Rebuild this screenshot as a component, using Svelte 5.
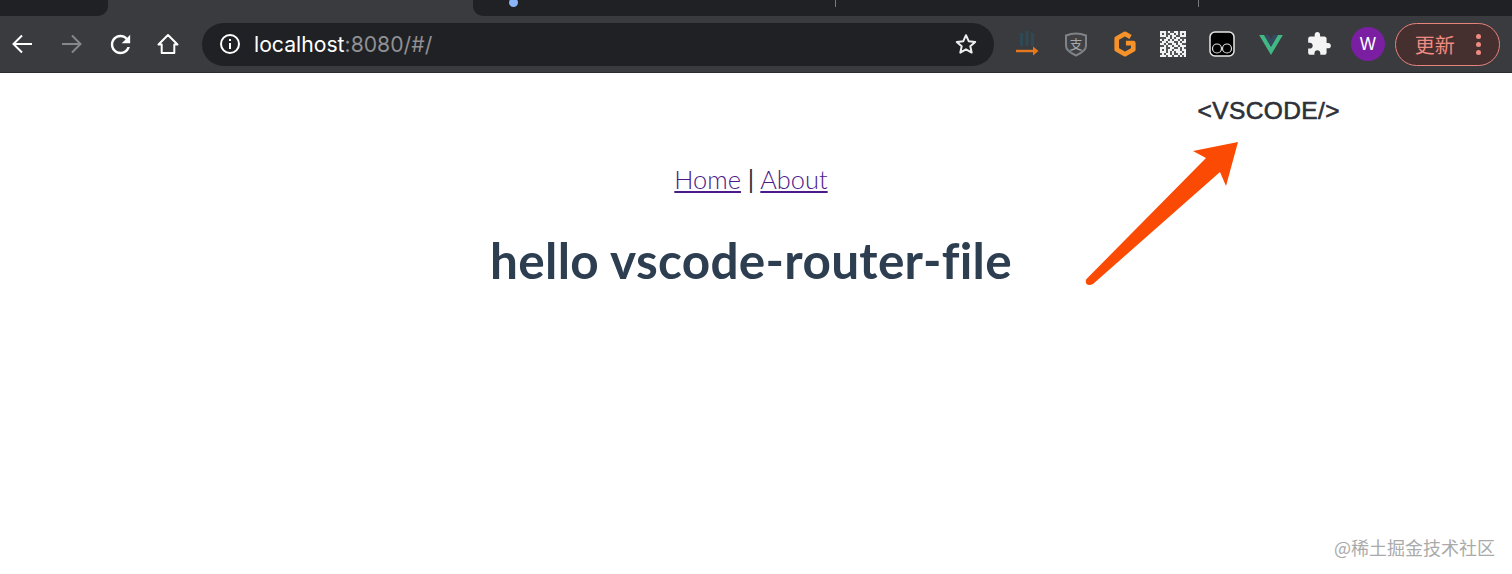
<script>
  const qr = [
    "1110100110111",
    "1010011010101",
    "1110101100111",
    "0001101011000",
    "1011010110101",
    "0110111001011",
    "1101001101100",
    "0010110110111",
    "1110011001010",
    "1010110111011",
    "1110101011101",
    "0101101001011",
    "1110110110101"
  ];
</script>

<div class="chrome">
  <div class="tabstrip">
    <div class="tab first"></div>
    <div class="tab active"></div>
    <div class="tab second">
      <span class="dot"></span>
      <span class="sep one"></span>
      <span class="sep two"></span>
    </div>
  </div>
  <div class="toolbar">
    <button class="nav" aria-label="back">
      <svg width="24" height="24" viewBox="1.500 0 24 24"><path d="M21.500 12H3.500M11.500 3.500 3 12l8.500 8.500" fill="none" stroke="#fff" stroke-width="2"/></svg>
    </button>
    <button class="nav" aria-label="forward">
      <svg width="24" height="24" viewBox="0.500 0 24 24"><path d="M2.500 12h18M12.500 3.500 21 12l-8.500 8.500" fill="none" stroke="#85878a" stroke-width="2"/></svg>
    </button>
    <button class="nav" aria-label="reload">
      <svg width="29" height="29" viewBox="0 0 24 24"><path d="M17.650 6.350C16.200 4.900 14.210 4 12 4c-4.420 0-7.990 3.580-7.990 8s3.570 8 7.990 8c3.730 0 6.840-2.550 7.730-6h-2.080c-.82 2.330-3.040 4-5.650 4-3.310 0-6-2.690-6-6s2.690-6 6-6c1.660 0 3.140.69 4.220 1.780L13 11h7V4l-2.350 2.350z" fill="#fff"/></svg>
    </button>
    <button class="nav" aria-label="home">
      <svg width="24" height="24" viewBox="0 0 24 24"><path d="M12 3 2.500 12.500h3.200V21h12.600v-8.500h3.200z" fill="none" stroke="#fff" stroke-width="2" stroke-linejoin="round"/></svg>
    </button>
    <div class="omnibox">
      <svg class="info" width="22" height="22" viewBox="0 0 22 22"><circle cx="11" cy="11" r="9" fill="none" stroke="#fff" stroke-width="2"/><path d="M10 6h2v2h-2zM10 10h2v6h-2z" fill="#fff"/></svg>
      <span class="url">localhost<span class="muted">:8080/#/</span></span>
      <svg class="star" width="24" height="24" viewBox="0 0 24 24"><path d="M12 3.200l2.700 6 6.500.7-4.900 4.300 1.400 6.400L12 17.300l-5.700 3.300 1.400-6.400-4.900-4.300 6.500-.7z" fill="none" stroke="#eee" stroke-width="2" stroke-linejoin="round"/></svg>
    </div>
    <div class="extensions">
      <span class="ext">
        <svg width="24" height="26" viewBox="0 0 24 26"><path d="M5 2h3v13H5zM10.500 0h3v15h-3zM16 2h3v13h-3z" fill="#2f4a55"/><path d="M1 20h19" stroke="#e8781e" stroke-width="2.400"/><path d="M18 15.500l5.500 4.500-5.500 4.500z" fill="#e8781e"/></svg>
      </span>
      <span class="ext">
        <svg width="24" height="26" viewBox="0 0 24 26"><path d="M2 4.500Q12 .5 22 4.500V15q0 5-10 9.500Q2 20 2 15z" fill="#3f4144" stroke="#808285" stroke-width="2"/><text x="12" y="18" text-anchor="middle" class="shield">支</text></svg>
      </span>
      <span class="ext">
        <svg width="24" height="26" viewBox="0 0 26 28"><path d="M19 6.500 13 3 4 8v12l9 5 9-5v-7h-8" fill="none" stroke="#f5922a" stroke-width="5" stroke-linejoin="round"/></svg>
      </span>
      <span class="ext">
        <svg width="26" height="26" viewBox="0 0 13 13" shape-rendering="crispEdges">
          <rect width="13" height="13" fill="#55565a"/>
          {#each qr as row, y}
            {#each row.split("") as cell, x}
              {#if cell === "1"}<rect {x} {y} width="1" height="1" fill="#f2f2f2"/>{/if}
            {/each}
          {/each}
        </svg>
      </span>
      <span class="ext">
        <svg width="26" height="26" viewBox="0 0 26 26"><rect x="1" y="1" width="24" height="24" rx="5" fill="#000" stroke="#e8e8e8" stroke-width="1.500"/><circle cx="8" cy="17.500" r="4.500" fill="none" stroke="#ddd" stroke-width="1.200"/><circle cx="18" cy="17.500" r="4.500" fill="none" stroke="#ddd" stroke-width="1.200"/></svg>
      </span>
      <span class="ext">
        <svg width="24" height="21" viewBox="0 0 26 23"><path d="M0 1h5.500L13 14 20.500 1H26L13 23z" fill="#41b883"/><path d="M5.500 1h5L13 5.500 15.500 1h5L13 14z" fill="#35495e"/></svg>
      </span>
      <span class="ext">
        <svg width="26" height="26" viewBox="0 0 24 24"><path d="M20.500 11H19V7c0-1.100-.9-2-2-2h-4V3.500C13 2.120 11.880 1 10.500 1S8 2.120 8 3.500V5H4c-1.100 0-1.990.9-1.990 2v3.800H3.500c1.490 0 2.700 1.210 2.700 2.700s-1.210 2.700-2.700 2.700H2V20c0 1.100.9 2 2 2h3.800v-1.500c0-1.490 1.210-2.700 2.700-2.700 1.490 0 2.700 1.210 2.700 2.700V22H17c1.100 0 2-.9 2-2v-4h1.500c1.380 0 2.500-1.120 2.500-2.500S21.880 11 20.500 11z" fill="#f4f4f4"/></svg>
      </span>
      <span class="avatar">W</span>
    </div>
    <div class="update">
      <span>更新</span>
      <span class="dots"><i></i><i></i><i></i></span>
    </div>
  </div>
</div>

<main class="page">
  <div class="brand">&lt;VSCODE/&gt;</div>
  <nav class="links"><a href="#/">Home</a> <span class="bar">|</span> <a href="#/about">About</a></nav>
  <h1>hello vscode-router-file</h1>

  <svg class="arrow" width="170" height="160" viewBox="0 0 170 160">
    <path d="M1.500 139 L121 18 L108 11 L153 2 L141 46 L135 32 L8 144 Q4 146 1.500 144 Q0 141 1.500 139Z" fill="#fb4a03"/>
  </svg>
  <div class="watermark">@稀土掘金技术社区</div>
</main>

<style>
  :global(body) {
    background: #fff;
  }

  .chrome {
    font-family: "Inter", "Noto Sans", sans-serif;
  }

  /* Tabs */
  .tabstrip {
    display: flex;
    height: 16px;
    background: #3a3b3f;
  }

  .tab {
    height: 16px;
    background: #202124;
  }

  .tab.first {
    width: 108px;
    border-radius: 0 0 10px 0;
  }

  .tab.active {
    width: 365px;
    background: #3a3b3f;
  }

  .tab.second {
    flex: 1;
    position: relative;
    border-radius: 0 0 0 10px;
  }

  .dot {
    position: absolute;
    left: 36px;
    top: -2px;
    width: 9px;
    height: 9px;
    border-radius: 50%;
    background: #8ab4f8;
  }

  .sep {
    position: absolute;
    top: 0;
    width: 1px;
    height: 7px;
    background: #77797c;
  }

  .sep.one {
    left: 362px;
  }

  .sep.two {
    left: 725px;
  }

  /* Toolbar */
  .toolbar {
    display: flex;
    align-items: center;
    height: 56px;
    background: #3a3b3f;
    border-bottom: 1px solid #2a2b2e;
    box-sizing: content-box;
  }

  .nav {
    width: 48px;
    height: 40px;
    flex: none;
    padding: 0;
    background: none;
    border: none;
    display: flex;
    align-items: center;
    justify-content: center;
  }

  .omnibox {
    display: flex;
    align-items: center;
    width: 792px;
    height: 43px;
    flex: none;
    margin-left: 10px;
    padding: 0 16px 0 17px;
    box-sizing: border-box;
    border-radius: 22px;
    background: #202124;
  }

  .url {
    flex: 1;
    margin-left: 13px;
    font-size: 21.200px;
    color: #fff;
  }

  .muted {
    color: #8e9093;
  }

  .extensions {
    display: flex;
    align-items: center;
    flex: none;
    margin-left: 9px;
  }

  .ext {
    width: 48.700px;
    height: 32px;
    display: flex;
    align-items: center;
    justify-content: center;
  }

  .shield {
    font-family: "Noto Sans CJK SC", sans-serif;
    font-size: 13px;
    fill: #a5a7aa;
  }

  .avatar {
    width: 34px;
    height: 34px;
    margin-left: 7px;
    border-radius: 50%;
    background: #7a1fa2;
    color: #fff;
    font-size: 17px;
    display: flex;
    align-items: center;
    justify-content: center;
  }

  .update {
    display: flex;
    align-items: center;
    justify-content: space-between;
    width: 105px;
    height: 43px;
    margin-left: 10px;
    padding: 0 18px 0 19px;
    box-sizing: border-box;
    border: 1.500px solid #e8837a;
    border-radius: 22px;
    background: #46302f;
    color: #ee8b82;
    font-family: "Noto Sans CJK SC", sans-serif;
    font-size: 20px;
  }

  .dots {
    display: flex;
    flex-direction: column;
    gap: 3px;
  }

  .dots i {
    display: block;
    width: 5px;
    height: 5px;
    border-radius: 50%;
    background: #ee8b82;
  }

  /* Page */
  .page {
    position: relative;
    height: 501px;
    padding-right: 10px;
    box-sizing: border-box;
    overflow: hidden;
    background: #fff;
    font-family: "Lato", "Open Sans", sans-serif;
    color: #2c3e50;
    text-align: center;
  }

  .brand {
    padding: 24px 162px 0 0;
    text-align: right;
    font-family: "Liberation Sans", Arial, sans-serif;
    font-size: 24.500px;
    line-height: 28px;
    letter-spacing: 0.400px;
    -webkit-text-stroke: 0.600px #2c3038;
    color: #2c3038;
  }

  .links {
    margin-top: 39px;
    font-size: 25.400px;
    line-height: 30px;
    font-weight: 300;
  }

  .links a {
    color: #4b1a8b;
  }

  .bar {
    color: #1f2d3a;
    font-weight: 400;
  }

  h1 {
    margin: 37px 0 0;
    font-size: 49.500px;
    line-height: 58px;
    font-weight: 700;
    font-variant-ligatures: none;
    letter-spacing: 0.300px;
  }

  .arrow {
    position: absolute;
    left: 1085px;
    top: 67px;
  }

  .watermark {
    position: absolute;
    right: 17px;
    top: 463px;
    font-family: "Noto Sans CJK SC", sans-serif;
    font-size: 18px;
    line-height: 22px;
    color: #aaaaaa;
  }
</style>
